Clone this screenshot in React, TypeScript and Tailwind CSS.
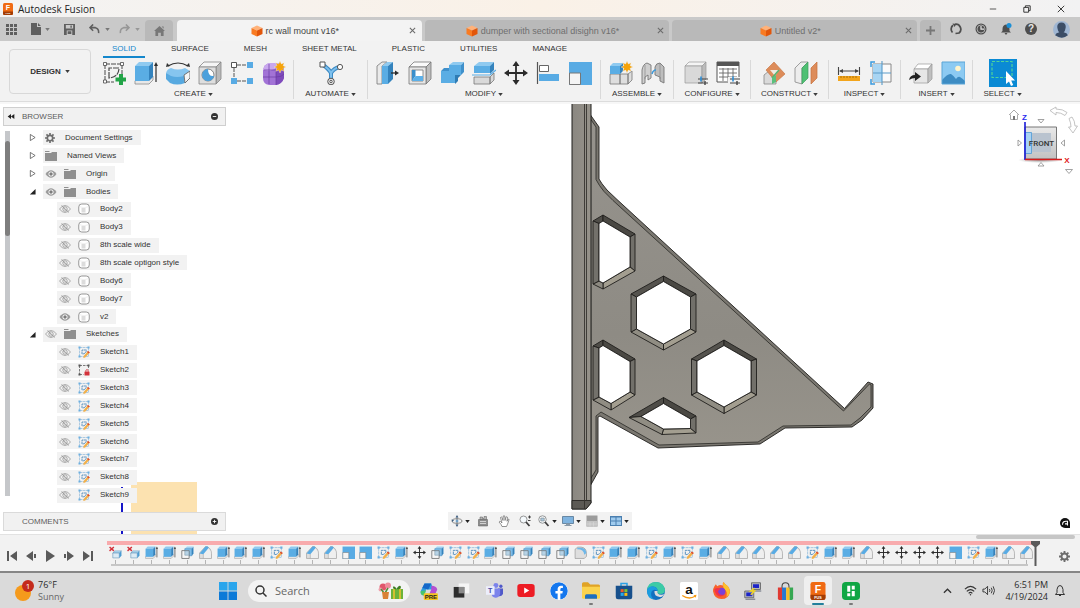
import type { ReactNode } from "react";
import { FaFacebook } from "react-icons/fa";

type IconProps = { className?: string };

/* ---------- small shared bits ---------- */

const Caret = ({ className = "text-[#3c3c3c]" }: IconProps) => (
  <svg viewBox="0 0 6 4" className={`h-[3px] w-[5px] shrink-0 ${className}`} fill="currentColor">
    <path d="M0 0h6L3 4z" />
  </svg>
);

const CubeLogo = ({ className = "size-3" }: IconProps) => (
  <svg viewBox="0 0 24 24" className={className}>
    <path d="M12 1 23 6 12 11 1 6z" fill="#ffb27a" />
    <path d="M1 6l11 5v12L1 18z" fill="#f97b22" />
    <path d="M23 6l-11 5v12l11-5z" fill="#e2560a" />
  </svg>
);

const FusionLogo = ({ className = "size-3" }: IconProps) => (
  <svg viewBox="0 0 24 24" className={className}>
    <rect x="2" y="0" width="20" height="24" rx="3" fill="#f06a13" />
    <path d="M2 17h20v4a3 3 0 0 1-3 3H5a3 3 0 0 1-3-3z" fill="#a33c05" />
    <text x="12" y="14" textAnchor="middle" fontSize="14" fontWeight="700" fontFamily="Liberation Sans, sans-serif" fill="#fff">F</text>
    <text x="12" y="22.500" textAnchor="middle" fontSize="5" fontWeight="700" fontFamily="Liberation Sans, sans-serif" fill="#fff">FUS</text>
  </svg>
);

/* ---------- ribbon and timeline icons ---------- */

const SketchIcon = ({ className = "size-6" }: IconProps) => (
  <svg viewBox="0 0 24 24" className={className} fill="none" stroke="#4a4a4a">
    <path d="M3 3h16M3 3v18M3 21h9M20 3v10" strokeWidth="1" strokeDasharray="5 1" />
    <path d="M7 17V7h10q0 9-10 10z" strokeWidth="1.200" strokeDasharray="6 1" />
    <g fill="#fff" strokeWidth=".8">
      <path d="M1.500 1.500h3v3h-3zM18.500 1.500h3v3h-3zM1.500 19h3v3h-3z" />
    </g>
    <path d="M17 13h4v3.500h3v4h-3V24h-4v-3.500h-3.500v-4H17z" fill="#22a447" stroke="none" />
  </svg>
);

const SketchItemIcon = ({ className = "size-[13px]" }: IconProps) => (
  <svg viewBox="0 0 24 24" className={className} fill="none">
    <path d="M3 3h18v18H3z" stroke="#7fb0d6" strokeWidth="1.200" strokeDasharray="5 1" />
    <path d="M8 16V8h9q-1 8-9 8z" stroke="#4a86b8" strokeWidth="1.700" strokeDasharray="5 1" />
    <path d="M1 1h4v4H1zM19 1h4v4h-4zM1 19h4v4H1z" fill="#6aaee0" />
    <path d="M20 10l3.500 3-9 10-4 1 .8-4z" fill="#f2b04a" />
    <path d="M20 10l3.500 3-2 2.200-3.500-3z" fill="#dc4a35" />
  </svg>
);

const LockedSketchIcon = ({ className = "size-[13px]" }: IconProps) => (
  <svg viewBox="0 0 24 24" className={className} fill="none" stroke="#555">
    <path d="M3 3h18M3 3v18M21 3v8M3 21h8" strokeWidth="1.500" strokeDasharray="5 2" />
    <path d="M1 1h4v4H1zM19 1h4v4h-4zM1 19h4v4H1z" fill="#555" stroke="none" />
    <path d="M15.500 15v-2q2.500-4 5 0v2" stroke="#d3323b" strokeWidth="1.800" />
    <rect x="13" y="15" width="10" height="8" rx="1" fill="#d3323b" stroke="none" />
  </svg>
);

const ExtrudeIcon = ({ className = "size-6" }: IconProps) => (
  <svg viewBox="0 0 24 24" className={className}>
    <path d="M1 20l4-5h14v4l-4 4H1z" fill="#e8e8e8" stroke="#8a8a8a" strokeWidth=".8" />
    <path d="M1 5l4-4h14l-4 4z" fill="#8fcaf0" />
    <path d="M1 5h14v15H1z" fill="#5aade4" />
    <path d="M15 5l4-4v15l-4 4z" fill="#3483bd" />
    <path d="M22 21V4" stroke="#2c2c2c" strokeWidth="1.200" />
    <path d="M22 1l2 4h-4z" fill="#2c2c2c" />
  </svg>
);

const RevolveIcon = ({ className = "size-6" }: IconProps) => (
  <svg viewBox="0 0 24 24" className={className}>
    <path d="M2 5q10-6 20 0" fill="none" stroke="#333" strokeWidth="1.100" />
    <path d="M0 6l1-4 3 3zM24 6l-1-4-3 3z" fill="#333" />
    <path d="M0 12q1-4 5-5 7 3 14 0l5 3-5 6q-6 4-14 1z" fill="#86c5ef" />
    <path d="M0 12l5 3q6 2 13 0l1 7q-8 3-15 0L0 18z" fill="#57a9e0" />
    <path d="M18 14l6-4v7l-5 5z" fill="#f5f5f5" stroke="#666" strokeWidth=".9" />
  </svg>
);

const HoleIcon = ({ className = "size-6" }: IconProps) => (
  <svg viewBox="0 0 24 24" className={className} stroke="#858585" strokeWidth=".8">
    <path d="M1 6l5-5h17l-5 5z" fill="#f5f5f5" />
    <path d="M18 6l5-5v17l-5 5z" fill="#b9b9b9" />
    <path d="M1 6h17v17H1z" fill="#dedede" />
    <circle cx="10" cy="14" r="6" fill="#fff" stroke="#666" />
    <path d="M10 8a6 6 0 1 0 6 7q-6 1-6-7z" fill="#4ba0dc" stroke="none" />
  </svg>
);

const PatternIcon = ({ className = "size-6" }: IconProps) => (
  <svg viewBox="0 0 24 24" className={className}>
    <path d="M7 4h10M4 7v10M7 20h10" fill="none" stroke="#555" strokeDasharray="4 1" />
    <path d="M1.500 1.500h5v5h-5z" fill="#fff" stroke="#555" />
    <path d="M17 1h6v6h-6zM1 17h6v6H1zM17 17h6v6h-6z" fill="#58abe4" />
  </svg>
);

const FormIcon = ({ className = "size-6" }: IconProps) => (
  <svg viewBox="0 0 24 24" className={className}>
    <path d="M1 9q1-6 7-7h8q6 1 6 6v9q-2 6-8 7H7q-6-1-6-7z" fill="#a273d6" />
    <path d="M1 9q1-6 7-7h8l-3 6-6 2z" fill="#c9a8ee" />
    <path d="M14 10l8-3v10q-2 6-8 7z" fill="#7f4cbb" />
    <path d="M7 3v20M1 16h13q6 0 8-3M2 9h12V24" fill="none" stroke="#6a3ba3" strokeWidth=".7" />
    <Spark x={18} y={6} />
  </svg>
);

const Spark = ({ x, y }: { x: number; y: number }) => (
  <path
    transform={`translate(${x} ${y})`}
    d="M0-6l1.300 2.900L4.200-4.200 3.100-1.300 6 0 3.100 1.300 4.200 4.200 1.300 3.100 0 6-1.300 3.100-4.200 4.200-3.100 1.300-6 0-3.100-1.300-4.200-4.200-1.300-3.100z"
    fill="#f5a30a"
    stroke="#f1f1f1"
    strokeWidth=".4"
  />
);

const AutomateIcon = ({ className = "size-6" }: IconProps) => (
  <svg viewBox="0 0 24 24" className={className}>
    <path d="M4 4q6 4 8 8 3-5 9-6M12 12v8" fill="none" stroke="#3c8ac4" strokeWidth="4" />
    <path d="M4 4q6 4 8 8 3-5 9-6M12 12v8" fill="none" stroke="#7dc0ee" strokeWidth="2" />
    <path d="M1 1h5v5H1z" fill="#fff" stroke="#555" />
    <circle cx="21" cy="6" r="2.600" fill="#fff" stroke="#555" />
    <circle cx="12" cy="20.500" r="3.300" fill="#e5e5e5" stroke="#555" />
    <circle cx="12" cy="20.500" r="1.200" fill="#fff" stroke="#555" />
  </svg>
);

const PressPullIcon = ({ className = "size-6" }: IconProps) => (
  <svg viewBox="0 0 24 24" className={className}>
    <path d="M1 5l5-4h5L6 5v18H1z" fill="#eaeaea" stroke="#777" strokeWidth=".8" />
    <path d="M6 5l5-4h6l-5 4z" fill="#8fcaf0" />
    <path d="M6 5h6v18H6z" fill="#5aade4" />
    <path d="M12 5l5-4v17l-5 5z" fill="#3483bd" />
    <path d="M15 12h5" stroke="#2c2c2c" strokeWidth="1.300" />
    <path d="M23 12l-4 2.500v-5z" fill="#2c2c2c" />
  </svg>
);

const ShellIcon = ({ className = "size-6" }: IconProps) => (
  <svg viewBox="0 0 24 24" className={className} stroke="#777" strokeWidth=".8">
    <path d="M1 6l5-5h17l-5 5z" fill="#fafafa" />
    <path d="M18 6l5-5v17l-5 5z" fill="#bdbdbd" />
    <path d="M1 6h17v17H1z" fill="#e6e6e6" />
    <path d="M4 9h11v11H4z" fill="#fff" />
    <path d="M4 9h3.500v6L4 20z" fill="#3b8fcb" stroke="none" />
    <path d="M7.500 15H15v5H4z" fill="#5cb0e8" stroke="none" />
  </svg>
);

const CombineBlueIcon = ({ className = "size-6" }: IconProps) => (
  <svg viewBox="0 0 24 24" className={className}>
    <path d="M9 4l4-3h11l-3 3z" fill="#8fcaf0" />
    <path d="M9 4h12v10h-6v8H1V10h8z" fill="#5aade4" />
    <path d="M1 10l3-3h5v3zM21 4l3-3v10l-3 3z" fill="#3f90cb" />
    <path d="M15 14h6l-3 3v3l-3 3z" fill="#2f7cb4" />
  </svg>
);

const SplitIcon = ({ className = "size-6" }: IconProps) => (
  <svg viewBox="0 0 24 24" className={className}>
    <path d="M2 5l5-4h15l-4 4z" fill="#8fcaf0" />
    <path d="M2 5h16v7H2z" fill="#5aade4" />
    <path d="M18 5l4-4v8l-4 4z" fill="#3483bd" />
    <path d="M0 14h18l6-5" fill="none" stroke="#58abe4" strokeWidth="1.200" />
    <path d="M2 16h16v7H2zM18 16l4-4v7l-4 4z" fill="#d9d9d9" stroke="#777" strokeWidth=".8" />
  </svg>
);

const MoveIcon = ({ className = "size-6" }: IconProps) => (
  <svg viewBox="0 0 24 24" className={className}>
    <path d="M12 3v18M3 12h18" stroke="#2b2b2b" strokeWidth="1.800" />
    <path d="M12 0l3.500 5h-7zM12 24l3.500-5h-7zM0 12l5-3.500v7zM24 12l-5-3.500v7z" fill="#2b2b2b" />
  </svg>
);

const AlignIcon = ({ className = "size-6" }: IconProps) => (
  <svg viewBox="0 0 24 24" className={className}>
    <path d="M1.500 1v22" stroke="#555" strokeWidth="1.200" />
    <path d="M3.500 4.500h9v6h-9z" fill="#fff" stroke="#666" />
    <path d="M3 13h20v7H3z" fill="#58abe4" />
  </svg>
);

const ScaleIcon = ({ className = "size-6" }: IconProps) => (
  <svg viewBox="0 0 24 24" className={className}>
    <path d="M1 1h23v23H1z" fill="#58abe4" />
    <path d="M1.500 12h11v11.500h-11z" fill="#f4f4f4" stroke="#777" />
  </svg>
);

const ComponentIcon = ({ className = "size-6" }: IconProps) => (
  <svg viewBox="0 0 24 24" className={className}>
    <path d="M1 13h10v10H1zM11 13h8v10h-8zM19 13l4-3v9l-4 4z" fill="#dedede" stroke="#777" strokeWidth=".8" />
    <path d="M1 5l3-3h10l-3 3z" fill="#8fcaf0" />
    <path d="M1 5h10v8H1z" fill="#5aade4" />
    <path d="M11 5l3-3v8l-3 3z" fill="#3483bd" />
    <Spark x={18} y={6} />
  </svg>
);

const JointIcon = ({ className = "size-6" }: IconProps) => (
  <svg viewBox="0 0 24 24" className={className}>
    <path d="M1 9q1-6 5-7l4 2v13l-3 2v-5l-3 2v6l-3 1z" fill="#cfcfcf" stroke="#777" strokeWidth=".9" />
    <path d="M14 6q1-4 5-4l4 4v16l-4-2v-4l-5-2z" fill="#bdbdbd" stroke="#777" strokeWidth=".9" />
    <path d="M4 4v14M19 2v16" stroke="#888" strokeWidth=".7" />
    <path d="M11 13q1-4 4-4" fill="none" stroke="#3d98d8" strokeWidth="1.500" />
  </svg>
);

const ConfigureIcon = ({ className = "size-6" }: IconProps) => (
  <svg viewBox="0 0 24 24" className={className}>
    <path d="M1 5l4-4h17l-4 4z" fill="#f4f4f4" stroke="#999" strokeWidth=".7" />
    <path d="M1 5h17v17H1z" fill="#d9d9d9" stroke="#999" strokeWidth=".7" />
    <path d="M18 5l4-4v17l-4 4z" fill="#bcbcbc" stroke="#999" strokeWidth=".7" />
    <path d="M14 18h10M14 22h10" stroke="#444" strokeWidth="1.100" />
    <path d="M17 15.500v5" stroke="#2c8fd8" strokeWidth="1.600" />
    <path d="M21 20v4" stroke="#444" strokeWidth="1.400" />
  </svg>
);

const TableIcon = ({ className = "size-6" }: IconProps) => (
  <svg viewBox="0 0 24 24" className={className}>
    <path d="M1 1h22v20H1z" fill="#fff" stroke="#555" />
    <path d="M1 1h22v4H1z" fill="#555" />
    <path d="M3 8h18M3 12h18M3 16h18M7 7v13M12 7v13M17 7v13" stroke="#666" strokeWidth=".9" />
    <path d="M12 16h12v8H12z" fill="#f1f1f1" />
    <path d="M14 18h10M14 22h10" stroke="#444" strokeWidth="1.100" />
    <path d="M17 15.500v5" stroke="#2c8fd8" strokeWidth="1.600" />
    <path d="M21 20v4" stroke="#444" strokeWidth="1.400" />
  </svg>
);

const PlaneIcon = ({ className = "size-6" }: IconProps) => (
  <svg viewBox="0 0 24 24" className={className}>
    <path d="M2 14l5-4 7 3v10H2z" fill="#dadada" stroke="#888" strokeWidth=".8" />
    <path d="M12 1l11 12-9 8L4 9z" fill="#dd8c5a" stroke="#c5703c" strokeWidth=".6" />
    <path d="M8 9h9l-4 6z" fill="#efe8e0" />
    <path d="M17 9l-7 8" stroke="#55b270" strokeWidth="1.500" />
    <path d="M10 17l4-3v7l-4 2z" fill="#5cc07d" />
  </svg>
);

const MidplaneIcon = ({ className = "size-6" }: IconProps) => (
  <svg viewBox="0 0 24 24" className={className}>
    <path d="M1 7l6-6h7L8 7v16l-7-2z" fill="#ededed" stroke="#888" strokeWidth=".8" />
    <path d="M8 7l6-6v16l-6 6z" fill="#4fc073" stroke="#3c9d5b" strokeWidth=".7" />
    <path d="M17 7l6-6v16l-6 6z" fill="#dd8c5a" stroke="#c5703c" strokeWidth=".7" />
  </svg>
);

const MeasureIcon = ({ className = "size-6" }: IconProps) => (
  <svg viewBox="0 0 24 24" className={className}>
    <path d="M1.500 6v8M22.500 6v8M3 10h18" stroke="#444" strokeWidth="1.100" />
    <path d="M2 10l4-2v4zM22 10l-4-2v4z" fill="#444" />
    <path d="M1 15h22v5H1z" fill="#f3a51c" />
    <path d="M4 15v2M7 15v2M10 15v2M13 15v2M16 15v2M19 15v2" stroke="#9b6505" strokeWidth=".8" />
  </svg>
);

const InterferenceIcon = ({ className = "size-6" }: IconProps) => (
  <svg viewBox="0 0 24 24" className={className}>
    <path d="M4 3h18v18H4z" fill="#fafafa" stroke="#888" />
    <path d="M4 3h9v18H4z" fill="#a8d5f3" />
    <path d="M13 0v24M4 12h18" stroke="#5a9cc9" strokeWidth="1.100" />
    <path d="M6 1H2v5M2 18v5h4" fill="none" stroke="#3a9ade" strokeWidth="1.500" />
  </svg>
);

const InsertIcon = ({ className = "size-6" }: IconProps) => (
  <svg viewBox="0 0 24 24" className={className}>
    <path d="M5 8l4-5h14l-4 5z" fill="#fff" stroke="#999" strokeWidth=".7" />
    <path d="M5 8h14v14H5z" fill="#e6e6e6" stroke="#999" strokeWidth=".7" />
    <path d="M19 8l4-5v15l-4 4z" fill="#bfbfbf" stroke="#999" strokeWidth=".7" />
    <path d="M0 19q1-5 6-5v-3l6 4.500-6 4.500v-3q-3 0-6 2z" fill="#222" />
  </svg>
);

const PictureIcon = ({ className = "size-6" }: IconProps) => (
  <svg viewBox="0 0 24 24" className={className}>
    <path d="M1 1h23v22H1z" fill="#8ccaf2" />
    <circle cx="17" cy="7.500" r="2.800" fill="#fff4cb" />
    <path d="M1 19q6-7 9-6 3 2 5 5 2-3 4-2 3 2 5 4v3H1z" fill="#3d8cc3" />
    <path d="M1 1h23v22H1z" fill="none" stroke="#5aa5d6" />
  </svg>
);

const SelectIcon = ({ className = "size-[28px]" }: IconProps) => (
  <svg viewBox="0 0 28 28" className={className}>
    <path d="M0 0h28v28H0z" fill="#0a8ad4" />
    <path d="M3 2.500h20v16H3z" fill="none" stroke="#4fd39a" strokeWidth="1.200" strokeDasharray="3 1.500" />
    <path d="M17 12v13l3-2.500 2 4.500 2.200-1-2-4.400H26z" fill="#fff" />
  </svg>
);

const CombineIcon = ({ className = "size-6" }: IconProps) => (
  <svg viewBox="0 0 24 24" className={className}>
    <path d="M7 5l4-4h12l-3 4z" fill="#9ed1f3" />
    <path d="M7 5h13v13H7z" fill="#7dbdea" stroke="#4189bd" />
    <path d="M20 5l3-4v13l-3 4z" fill="#3483bd" />
    <path d="M1.500 8.500H15V23H1.500z" fill="#f6f6f6" stroke="#666" strokeWidth="1.400" />
    <path d="M7 9h7.500v8H7z" fill="#b7d3e6" stroke="#7b97aa" />
  </svg>
);

const ChamferIcon = ({ className = "size-6" }: IconProps) => (
  <svg viewBox="0 0 24 24" className={className}>
    <path d="M1 13L12 1h3q8 4 8 13v9H1z" fill="#dedede" stroke="#8c8c8c" />
    <path d="M8 14l9-10q5 4 5 10v8H8z" fill="#efefef" />
    <path d="M1 14L12 1h4l2 2L8 15z" fill="#58abe4" />
    <path d="M8 15v8" fill="none" stroke="#a0a0a0" />
  </svg>
);

const FilletIcon = ({ className = "size-6" }: IconProps) => (
  <svg viewBox="0 0 24 24" className={className}>
    <path d="M2 6l5-4h6q10 1 10 12v5l-4 4H2z" fill="#dedede" stroke="#808080" />
    <path d="M6 3h7q9 1 10 10l-4 3Q18 6 6 6z" fill="#6fb7e8" />
  </svg>
);

const ErrorBodyIcon = ({ className = "size-6" }: IconProps) => (
  <svg viewBox="0 0 24 24" className={className}>
    <path d="M1 2l8 7M9 2L1 9" stroke="#d3323b" strokeWidth="2.600" />
    <path d="M7 13l4-4h12l-4 4z" fill="#b4dcf5" stroke="#5a8eb2" />
    <path d="M7 13h12v9H7z" fill="#dcebf5" stroke="#5a8eb2" />
    <path d="M19 13l4-4v9l-4 4z" fill="#4b9bd2" />
  </svg>
);

/* ---------- browser icons ---------- */

const Eye = ({ className = "h-2 w-3" }: IconProps) => (
  <svg viewBox="0 0 24 16" className={className}>
    <path d="M1 8q11-15 22 0-11 15-22 0z" fill="#9b9b9b" />
    <circle cx="12" cy="8" r="5" fill="#fff" />
    <circle cx="12" cy="8" r="3.500" fill="#7d7d7d" />
  </svg>
);

const EyeHidden = ({ className = "h-2 w-3" }: IconProps) => (
  <svg viewBox="0 0 24 16" className={className} fill="none" stroke="#8d8d8d" strokeWidth="1.400">
    <path d="M1 8q11-14 22 0-11 14-22 0z" />
    <circle cx="12" cy="8" r="4.500" />
    <path d="M5 1l15 14M9 6l5 5" />
  </svg>
);

const Folder = ({ className = "h-[10px] w-3" }: IconProps) => (
  <svg viewBox="0 0 24 20" className={className} fill="#8f8f8f">
    <path d="M0 0h9v2H0zM0 4h12l2-2h10v18H0z" />
  </svg>
);

const Gear = ({ className = "size-[10px]" }: IconProps) => (
  <svg viewBox="0 0 24 24" className={className} fill="none" stroke="#6e6e6e">
    <circle cx="12" cy="12" r="6.500" strokeWidth="4" />
    <path d="M12 0v5M12 19v5M0 12h5M19 12h5M3.500 3.500l3.500 3.500M17 17l3.500 3.500M3.500 20.500L7 17M17 7l3.500-3.500" strokeWidth="4" />
  </svg>
);

const Body = ({ className = "size-3" }: IconProps) => (
  <svg viewBox="0 0 24 24" className={className}>
    <rect x="1.500" y="2" width="21" height="20" rx="6" fill="#fff" stroke="#777" strokeWidth="1.500" />
    <path d="M2 7q10 5 20 0" fill="none" stroke="#ddd" />
    <path d="M7 10h8v9H7z" fill="#dcdcdc" />
  </svg>
);

/* ---------- title bar and document tabs ---------- */

const TitleBar = () => (
  <header className="flex h-[17px] shrink-0 items-center bg-linear-to-r from-[#f3f3f3] via-[#faf1e7] to-[#f2f2f3] pl-[2px]">
    <FusionLogo className="h-3 w-3" />
    <h1 className="ml-1 font-['Open_Sans',sans-serif] text-[10px] leading-4 text-[#222]">Autodesk Fusion</h1>
    <div className="ml-auto flex gap-[2px] pr-[3px]">
      <button aria-label="Minimize" className="flex h-4 w-8 items-center justify-center">
        <svg viewBox="0 0 10 10" className="size-2" stroke="#333"><path d="M1 5h8" /></svg>
      </button>
      <button aria-label="Restore" className="flex h-4 w-8 items-center justify-center">
        <svg viewBox="0 0 10 10" className="size-2" fill="none" stroke="#333" strokeWidth="1.200">
          <path d="M1 3h6v6H1zM3 3V1h6v6H7" />
        </svg>
      </button>
      <button aria-label="Close" className="flex h-4 w-8 items-center justify-center">
        <svg viewBox="0 0 10 10" className="size-2" stroke="#333" strokeWidth="1.200"><path d="M1 1l8 8M9 1L1 9" /></svg>
      </button>
    </div>
  </header>
);

const DocTab = ({ title, active }: { title: string; active?: boolean }) => (
  <div
    className={`flex h-[21px] min-w-0 flex-1 items-center rounded-t-sm pl-[9px] ${
      active ? "bg-[#f3f3f3] text-[#444]" : "bg-[#b9b9b9] text-[#6f6f6f]"
    }`}
  >
    <button className="flex min-w-0 flex-1 items-center justify-center gap-[3px] text-[9px] leading-4 whitespace-nowrap">
      <CubeLogo />
      {title}
    </button>
    <button aria-label={`Close ${title}`} className="flex h-4 w-[18px] items-center justify-center">
      <svg viewBox="0 0 8 8" className="size-[7px]" stroke="#6b6b6b" strokeWidth="1.200"><path d="M1 1l6 6M7 1L1 7" /></svg>
    </button>
  </div>
);

const TabBar = () => (
  <div className="flex h-6 shrink-0 items-end bg-[#c9c9c9]">
    <div className="flex h-full w-[145px] shrink-0 items-center pl-[6px] text-[#5f5f5f]">
      <button aria-label="Data panel">
        <svg viewBox="0 0 11 11" className="size-[11px]" fill="currentColor">
          <path d="M0 0h3v3H0zM4 0h3v3H4zM8 0h3v3H8zM0 4h3v3H0zM4 4h3v3H4zM8 4h3v3H8zM0 8h3v3H0zM4 8h3v3H4zM8 8h3v3H8z" />
        </svg>
      </button>
      <button aria-label="File" className="ml-[14px] flex items-center gap-1">
        <svg viewBox="0 0 10 12" className="h-3 w-[10px]" fill="currentColor"><path d="M0 0h6v4h4v8H0zM7 0l3 3H7z" /></svg>
        <Caret className="text-[#777]" />
      </button>
      <button aria-label="Save" className="ml-[14px]">
        <svg viewBox="0 0 12 12" className="size-[11px]" fill="currentColor">
          <path fillRule="evenodd" d="M0 0h12v12H0zM2 1v4h8V1zM3 7v5h6V7zM7 1.500h1.500v2.500H7zM4 8h4v3H4z" />
        </svg>
      </button>
      <button aria-label="Undo" className="ml-[14px] flex items-center gap-[5px]">
        <svg viewBox="0 0 12 11" className="h-[10px] w-[11px]" fill="none" stroke="currentColor" strokeWidth="1.700">
          <path d="M1 4h6q4 1 3.500 6M4.500 .5L1 4l3.500 3.500" />
        </svg>
        <Caret className="text-[#777]" />
      </button>
      <button aria-label="Redo" className="ml-[9px] flex items-center gap-[5px] text-[#979797]">
        <svg viewBox="0 0 12 11" className="h-[10px] w-[11px]" fill="none" stroke="currentColor" strokeWidth="1.700">
          <path d="M11 4H5Q1 5 1.500 10M7.500 .5L11 4 7.500 7.500" />
        </svg>
        <Caret className="text-[#979797]" />
      </button>
    </div>
    <button aria-label="Home" className="mr-1 flex h-[21px] w-7 shrink-0 items-center justify-center rounded-t-sm bg-[#b9b9b9]">
      <svg viewBox="0 0 12 11" className="h-[10px] w-[11px]" fill="#777">
        <path d="M6 0l6 5.500h-1.500V11H7.500V7.500h-3V11h-3V5.500H0zM8.500 .5h2v2.500z" />
      </svg>
    </button>
    <div className="flex min-w-0 flex-1 gap-[3px]">
      <DocTab title="rc wall mount v16*" active />
      <DocTab title="dumper with sectional disighn v16*" />
      <DocTab title="Untitled v2*" />
    </div>
    <button aria-label="New design" className="ml-[3px] flex h-[21px] w-[21px] shrink-0 items-center justify-center rounded-t-sm bg-[#b9b9b9]">
      <svg viewBox="0 0 10 10" className="size-[9px]" stroke="#777" strokeWidth="2"><path d="M5 0v10M0 5h10" /></svg>
    </button>
    <div className="flex h-full shrink-0 items-center gap-[13px] pr-[10px] pl-[9px]">
      <button aria-label="Extensions">
        <svg viewBox="0 0 24 24" className="size-3" fill="none" stroke="#4e4e4e" strokeWidth="3.500">
          <path d="M5 19A10 10 0 0 1 6 4.500M10 2.500a10 10 0 0 1 8 17.500l-7 1" />
          <path d="M5 1l8 1-4 6z" fill="#4e4e4e" stroke="none" />
        </svg>
      </button>
      <button aria-label="Job status">
        <svg viewBox="0 0 24 24" className="size-3">
          <circle cx="12" cy="12" r="11" fill="#4e4e4e" />
          <circle cx="12" cy="12" r="8" fill="none" stroke="#c9c9c9" strokeWidth="1.500" />
          <path d="M12 6v6h6" fill="none" stroke="#e4e4e4" strokeWidth="2.500" />
        </svg>
      </button>
      <button aria-label="Notifications">
        <svg viewBox="0 0 24 24" className="size-3">
          <path d="M12 3q7 1 7 9v4l3 3H2l3-3v-4q0-8 7-9zM9 20h6l-3 4z" fill="#4e4e4e" />
          <circle cx="18" cy="5" r="5" fill="#1b8fd6" />
        </svg>
      </button>
      <button aria-label="Help" className="flex size-3 items-center justify-center rounded-full bg-[#4e4e4e] text-[10px] leading-3 font-bold text-[#e8e8e8]">
        ?
      </button>
      <button aria-label="Account" className="ml-[3px]">
        <svg viewBox="0 0 24 24" className="size-[17px]">
          <circle cx="12" cy="12" r="12" fill="#9fb6d3" />
          <path d="M12 2q6 0 6 6.500Q17 15 15 16q5 1 6 4-8 7-18 0 1-3 6-4-2-1-3-7.500Q6 2 12 2z" fill="#3b4d66" />
        </svg>
      </button>
    </div>
  </div>
);

/* ---------- ribbon ---------- */

const ribbonTabs = ["SOLID", "SURFACE", "MESH", "SHEET METAL", "PLASTIC", "UTILITIES", "MANAGE"];

type Tool = { name: string; icon: ReactNode };

const ribbonGroups: { label: string; width: string; tools: Tool[] }[] = [
  {
    label: "CREATE",
    width: "w-[199px]",
    tools: [
      { name: "Create Sketch", icon: <SketchIcon /> },
      { name: "Extrude", icon: <ExtrudeIcon /> },
      { name: "Revolve", icon: <RevolveIcon /> },
      { name: "Hole", icon: <HoleIcon /> },
      { name: "Rectangular Pattern", icon: <PatternIcon /> },
      { name: "Create Form", icon: <FormIcon /> },
    ],
  },
  { label: "AUTOMATE", width: "w-[74px]", tools: [{ name: "Automate", icon: <AutomateIcon /> }] },
  {
    label: "MODIFY",
    width: "w-[233px]",
    tools: [
      { name: "Press Pull", icon: <PressPullIcon /> },
      { name: "Shell", icon: <ShellIcon /> },
      { name: "Combine", icon: <CombineBlueIcon /> },
      { name: "Split Body", icon: <SplitIcon /> },
      { name: "Move", icon: <MoveIcon /> },
      { name: "Align", icon: <AlignIcon /> },
      { name: "Scale", icon: <ScaleIcon /> },
    ],
  },
  {
    label: "ASSEMBLE",
    width: "w-[73px]",
    tools: [
      { name: "New Component", icon: <ComponentIcon /> },
      { name: "Joint", icon: <JointIcon /> },
    ],
  },
  {
    label: "CONFIGURE",
    width: "w-[77px]",
    tools: [
      { name: "Configure", icon: <ConfigureIcon /> },
      { name: "Configuration Table", icon: <TableIcon /> },
    ],
  },
  {
    label: "CONSTRUCT",
    width: "w-[78px]",
    tools: [
      { name: "Offset Plane", icon: <PlaneIcon /> },
      { name: "Midplane", icon: <MidplaneIcon /> },
    ],
  },
  {
    label: "INSPECT",
    width: "w-[72px]",
    tools: [
      { name: "Measure", icon: <MeasureIcon /> },
      { name: "Interference", icon: <InterferenceIcon /> },
    ],
  },
  {
    label: "INSERT",
    width: "w-[72px]",
    tools: [
      { name: "Insert Derive", icon: <InsertIcon /> },
      { name: "Canvas", icon: <PictureIcon /> },
    ],
  },
  { label: "SELECT", width: "w-[60px]", tools: [{ name: "Select", icon: <SelectIcon /> }] },
];

const Ribbon = () => (
  <div className="shrink-0 border-b-2 border-[#f7f7f7]">
    <div className="flex h-[61px] border-b border-[#dcdcdc] bg-[#f2f2f2] text-[8px] leading-3 text-[#333]">
      <button className="mt-2 ml-[9px] flex h-[45px] w-[82px] shrink-0 items-center justify-center gap-1 rounded-sm border border-[#d8d8d8] font-bold">
        DESIGN
        <Caret />
      </button>
      <div className="ml-[3px] min-w-0 flex-1">
        <nav className="flex gap-[17px] pl-[9px]">
          {ribbonTabs.map((tab, i) => (
            <button
              key={tab}
              className={`h-[17px] border-b-2 px-[9px] whitespace-nowrap ${
                i === 0 ? "border-[#1487cc] text-[#1487cc]" : "border-transparent"
              }`}
            >
              {tab}
            </button>
          ))}
        </nav>
        <div className="flex">
          {ribbonGroups.map((group, i) => (
            <section
              key={group.label}
              className={`mt-[2px] flex h-[39px] shrink-0 flex-col items-center ${group.width} ${
                i > 0 ? "border-l border-[#d9d9d9]" : ""
              }`}
            >
              <div className="flex h-[26px] shrink-0 items-center gap-2">
                {group.tools.map((tool) => (
                  <button key={tool.name} aria-label={tool.name}>
                    {tool.icon}
                  </button>
                ))}
              </div>
              <button className="mt-[2px] flex shrink-0 items-center gap-[2px]">
                {group.label}
                <Caret />
              </button>
            </section>
          ))}
        </div>
      </div>
    </div>
  </div>
);

/* ---------- browser tree ---------- */

type Kind = "settings" | "views" | "folder" | "body" | "sketch" | "locked";
type Node = { name: string; kind: Kind; open?: boolean; visible?: boolean };

const tree: Node[] = [
  { name: "Document Settings", kind: "settings" },
  { name: "Named Views", kind: "views" },
  { name: "Origin", kind: "folder", visible: true },
  { name: "Bodies", kind: "folder", visible: true, open: true },
  { name: "Body2", kind: "body" },
  { name: "Body3", kind: "body" },
  { name: "8th scale wide", kind: "body" },
  { name: "8th scale optigon style", kind: "body" },
  { name: "Body6", kind: "body" },
  { name: "Body7", kind: "body" },
  { name: "v2", kind: "body", visible: true },
  { name: "Sketches", kind: "folder", open: true },
  { name: "Sketch1", kind: "sketch" },
  { name: "Sketch2", kind: "locked" },
  { name: "Sketch3", kind: "sketch" },
  { name: "Sketch4", kind: "sketch" },
  { name: "Sketch5", kind: "sketch" },
  { name: "Sketch6", kind: "sketch" },
  { name: "Sketch7", kind: "sketch" },
  { name: "Sketch8", kind: "sketch" },
  { name: "Sketch9", kind: "sketch" },
];

const kindIcons: Record<Kind, ReactNode> = {
  settings: <Gear />,
  views: <Folder />,
  folder: <Folder />,
  body: <Body />,
  sketch: <SketchItemIcon className="size-3" />,
  locked: <LockedSketchIcon className="size-3" />,
};

const TreeRow = ({ node }: { node: Node }) => {
  const child = node.kind === "body" || node.kind === "sketch" || node.kind === "locked";
  const hasEye = node.kind !== "settings" && node.kind !== "views";

  return (
    <li className="flex min-h-0 flex-1 items-center pl-[17px]">
      {child ? (
        <span className="w-[30px]" />
      ) : (
        <button aria-label={`Toggle ${node.name}`} className="mr-[6px] flex w-[10px] justify-center">
          <svg viewBox="0 0 8 8" className="size-[7px]">
            {node.open ? <path d="M7.500 1v6.500H1z" fill="#222" /> : <path d="M1.500 .5v7L7 4z" fill="#fff" stroke="#555" strokeWidth=".9" />}
          </svg>
        </button>
      )}
      <div className="flex h-[15px] items-center bg-[#f2f2f2] pr-2 pl-[2px]">
        {hasEye && (
          <button aria-label={`Show or hide ${node.name}`} className="mr-[7px]">
            {node.visible ? <Eye /> : <EyeHidden />}
          </button>
        )}
        {kindIcons[node.kind]}
        <span className="ml-[10px] whitespace-nowrap">{node.name}</span>
      </div>
    </li>
  );
};

const BrowserPanel = () => (
  <aside className="relative ml-[3px] flex h-full w-[223px] flex-col py-[3px] text-[8px] leading-3 text-[#333]">
    <div className="flex h-[19px] shrink-0 items-center border border-[#cfcfcf] bg-[#f1f1f1] px-[3px] text-[#5c5c5c]">
      <button aria-label="Collapse browser">
        <svg viewBox="0 0 8 6" className="h-[5px] w-2" fill="#222"><path d="M4 0v6L0 3zM8 0v6L4 3z" /></svg>
      </button>
      <h2 className="ml-[7px]">BROWSER</h2>
      <button aria-label="Browser options" className="mr-1 ml-auto">
        <svg viewBox="0 0 8 8" className="size-[7px]"><circle cx="4" cy="4" r="4" fill="#333" /><path d="M2 4h4" stroke="#fff" /></svg>
      </button>
    </div>
    <div className="mt-[3px] mb-2 flex min-h-0 flex-1">
      <div className="mt-[2px] mb-2 ml-[2px] w-[5px] bg-[#c5c7ca]">
        <div className="mt-[10px] h-[26%] rounded-full bg-[#7e7e7e]" />
      </div>
      <ul className="flex flex-1 flex-col">
        {tree.map((node) => (
          <TreeRow key={node.name} node={node} />
        ))}
      </ul>
    </div>
    <div className="flex h-[19px] shrink-0 items-center border border-[#dadada] bg-[#f1f1f1] px-[3px] text-[#5c5c5c]">
      <h2 className="ml-[15px]">COMMENTS</h2>
      <button aria-label="Add comment" className="mr-1 ml-auto">
        <svg viewBox="0 0 8 8" className="size-[7px]">
          <circle cx="4" cy="4" r="4" fill="#333" />
          <path d="M2 4h4M4 2v4" stroke="#fff" />
        </svg>
      </button>
    </div>
  </aside>
);

/* ---------- 3D model ---------- */

type Pt = [number, number];

const holes: { outer: Pt[]; inner: Pt[]; fills: string[] }[] = [
  {
    outer: [[593, 221], [603, 215], [635, 234], [635, 271], [603, 289], [593, 284]],
    inner: [[599, 223.5], [603, 221], [630, 237], [630, 267], [603, 283], [599, 281]],
    fills: ["#4f4d48", "#4a4843", "#72706a", "#a39e90", "#8c8980", "#73716b"],
  },
  {
    outer: [[631, 294], [663.5, 276], [696, 294], [696, 332], [663.5, 350], [631, 332]],
    inner: [[636.5, 297], [663.5, 281.5], [690.5, 297], [690.5, 329], [663.5, 344], [636.5, 329]],
    fills: ["#55534e", "#4a4843", "#72706a", "#a39e90", "#908d83", "#73716b"],
  },
  {
    outer: [[691.5, 359], [724, 340], [756.5, 359], [756.5, 395], [724, 413.5], [691.5, 395]],
    inner: [[697, 361], [724, 345.5], [751, 361], [751, 392], [724, 407], [697, 392]],
    fills: ["#55534e", "#4a4843", "#72706a", "#a39e90", "#908d83", "#73716b"],
  },
  {
    outer: [[593, 346], [603, 340], [635, 359], [635, 395], [611, 410], [593, 400]],
    inner: [[599, 348], [603, 345.5], [630, 361.5], [630, 392], [611, 403.5], [599, 397]],
    fills: ["#4f4d48", "#4a4843", "#72706a", "#a39e90", "#908d83", "#73716b"],
  },
  {
    outer: [[629, 417.5], [663.5, 397.5], [696, 416], [696, 433], [662, 434.5]],
    inner: [[641, 416.5], [663.5, 403.5], [690.5, 419], [690.5, 428.5], [663.5, 429]],
    fills: ["#4f4d48", "#4a4843", "#72706a", "#a39e90", "#908d83"],
  },
];

const Model = () => (
  <svg viewBox="0 104 1080 430" className="absolute inset-0 h-full w-full" strokeLinejoin="round">
    <defs>
      <linearGradient id="face" x1="0" y1="0" x2="0" y2="1">
        <stop offset="0" stopColor="#96938d" />
        <stop offset=".6" stopColor="#8e8b84" />
        <stop offset="1" stopColor="#9a968d" />
      </linearGradient>
      <linearGradient id="post" x1="0" y1="0" x2="1" y2="0">
        <stop offset="0" stopColor="#8a8781" />
        <stop offset="1" stopColor="#96928a" />
      </linearGradient>
    </defs>
    {/* back edge strip of the bracket */}
    <path
      d="M590.500 115l8.500 12v52q2 4 8 11l10 9.500L844.500 408.500l23.500-26.500 5 2v24l-11 12-10 7-67 1-25 16-102 4-58-32-2 1v55l-7 12.500z"
      fill="#7a7770"
      stroke="#1f1e1c"
      strokeWidth=".9"
    />
    {/* front face */}
    <path
      d="M590.500 119l5.500 8v52.500q3 6 8 12l9 9L843.500 411l26-27 1.500 1v22l-11 11-9 7-68 1-25 16-99 3-58-33-5 4v54l-5 8z"
      fill="url(#face)"
      stroke="#2a2926"
      strokeWidth=".8"
    />
    {holes.map((hole, n) => (
      <g key={n} stroke="#1f1e1c" strokeWidth=".9">
        {hole.outer.map((p, i) => {
          const j = (i + 1) % hole.outer.length;
          const quad = [p, hole.outer[j], hole.inner[j], hole.inner[i]];
          return <polygon key={i} points={quad.join(" ")} fill={hole.fills[i]} />;
        })}
        <polygon points={hole.inner.join(" ")} fill="#fff" />
      </g>
    ))}
    {/* wall post */}
    <path d="M572 102h19v401l-5 6h-14z" fill="url(#post)" stroke="#1f1e1c" />
    <path d="M572 500.500h19v2.500l-5 6h-14z" fill="#5c5a55" stroke="#1f1e1c" strokeWidth=".8" />
    <path d="M584.500 102v407M586.500 102v398" stroke="#35332f" strokeWidth=".9" />
  </svg>
);

const ViewCube = () => (
  <svg viewBox="1000 104 80 76" className="absolute top-0 right-0 h-[76px] w-20" fontFamily="Liberation Sans, sans-serif">
    <defs>
      <linearGradient id="cube" x1="0" y1="0" x2="0" y2="1">
        <stop offset="0" stopColor="#e9e9e9" />
        <stop offset="1" stopColor="#c2c2c2" />
      </linearGradient>
      <radialGradient id="shade">
        <stop offset="0" stopColor="#999" />
        <stop offset="1" stopColor="#999" stopOpacity="0" />
      </radialGradient>
    </defs>
    <ellipse cx="1040" cy="160" rx="22" ry="3" fill="url(#shade)" />
    <path d="M1009 115l5-5 5 5M1010.500 114.500v5h7v-5" fill="#fff" stroke="#aaa" />
    <path d="M1013 116h2v4h-2z" fill="#777" />
    <path d="M1025 127h31.500v32H1025z" fill="url(#cube)" stroke="#777" />
    <path d="M1032 133h19v19h-19z" fill="#b9c3cf" />
    <path d="M1025 132.500h6.500v21h-6.500z" fill="#a9d2f2" stroke="#4b98d4" strokeWidth=".8" />
    <text x="1041.500" y="146" textAnchor="middle" fontSize="8" fontWeight="500" fontFamily="Roboto, sans-serif" fill="#333">FRONT</text>
    <path d="M1025 122v38" stroke="#1a1ad8" strokeWidth="1.600" />
    <path d="M1025 159.500h37" stroke="#d81a1a" strokeWidth="1.600" />
    <text x="1024.500" y="120" textAnchor="middle" fontSize="8" fontWeight="700" fill="#2a2af0">Z</text>
    <text x="1067" y="163" textAnchor="middle" fontSize="8" fontWeight="700" fill="#e02020">X</text>
    <g fill="#fff" stroke="#8c8c8c" strokeWidth=".8">
      <path d="M1038 119.500h6l-3 3.500zM1038 166h6l-3-3.500zM1018 140v6l3.500-3zM1064.500 140v6l-3.500-3zM1065.500 169.500h7l-3.500 4z" />
    </g>
    <g fill="#fff" stroke="#b5b5b5" strokeWidth=".8">
      <path d="M1050 110.500l6-3.500v2q7 0 11 3.500l-2 3q-4-3-9-3v2.500z" />
      <path d="M1069 118.500l3-1.500q3 4 3 9h2.500l-4.500 7-4.500-6h2.500q0-4-2-8.500z" />
    </g>
  </svg>
);

/* ---------- navigation bar ---------- */

const navTools: { name: string; menu?: boolean; icon: ReactNode }[] = [
  {
    name: "Orbit",
    menu: true,
    icon: (
      <g fill="none" stroke="#666" strokeWidth="1.500">
        <ellipse cx="12" cy="12" rx="10" ry="4.500" />
        <path d="M12 4v16" />
        <path d="M12 0l3 5H9zM12 24l3-5H9zM1 9l5 1-3 4z" fill="#3b5d80" stroke="none" />
        <path d="M9 12h6M12 9v6" stroke="#3d8ecb" />
      </g>
    ),
  },
  {
    name: "Look At",
    icon: (
      <g>
        <path d="M3 9h18v13H3z" fill="#8d8d8d" stroke="#555" />
        <path d="M6 9V4h5v3h3V3h5v6z" fill="#b5b5b5" stroke="#555" />
        <path d="M6 13h12M6 17h12" stroke="#e8e8e8" strokeWidth="1.500" />
      </g>
    ),
  },
  {
    name: "Pan",
    icon: (
      <path
        d="M8 23q-1-4-6-9 1-2 3-1l3 3L5 5q2-2 3 0l2 6 .500-9q1.500-2 3 0l.500 9 2-7q2-1.500 3 .500l-1 8 2-4q2-1 2 1l-3 9-2 4.500z"
        fill="#fff"
        stroke="#666"
        strokeWidth="1.400"
      />
    ),
  },
  {
    name: "Zoom",
    icon: (
      <g>
        <circle cx="9" cy="9" r="7" fill="#f5fafd" stroke="#777" strokeWidth="1.500" />
        <path d="M14 14l7 8" stroke="#3f3f3f" strokeWidth="3.500" />
        <path d="M18 4h6M21 1v6M18 11h5" stroke="#333" strokeWidth="1.800" />
      </g>
    ),
  },
  {
    name: "Fit",
    menu: true,
    icon: (
      <g>
        <circle cx="9" cy="9" r="7.500" fill="#f5fafd" stroke="#777" strokeWidth="1.500" />
        <path d="M5.500 6h7v6h-7z" fill="#a9c9df" stroke="#777" />
        <path d="M14 14l7 8" stroke="#3f3f3f" strokeWidth="3.500" />
      </g>
    ),
  },
  {
    name: "Display Settings",
    menu: true,
    icon: (
      <g>
        <path d="M1 3h22v14H1z" fill="#7fb3df" stroke="#4e6f8d" strokeWidth="1.500" />
        <path d="M8 17h8v3h3v2H5v-2h3z" fill="#8a9aa8" />
      </g>
    ),
  },
  {
    name: "Grid and Snaps",
    menu: true,
    icon: (
      <g>
        <path d="M1 1h22v22H1z" fill="#9c9c9c" />
        <path d="M1 12h22v11H1z" fill="#c4c4c4" />
        <path d="M8 14v9M15 14v9M1 18h22" stroke="#ddd" />
      </g>
    ),
  },
  {
    name: "Viewports",
    menu: true,
    icon: (
      <g>
        <path d="M0 2h24v20H0z" fill="#4a7fb0" />
        <path d="M2 5h9v6H2zM13 5h9v6h-9zM2 13h9v7H2zM13 13h9v7h-9z" fill="#9fcbee" />
      </g>
    ),
  },
];

const NavBar = () => (
  <div className="absolute bottom-1 left-1/2 flex h-[18px] -translate-x-1/2 items-center gap-[5px] bg-[#f2f2f2] px-[3px]">
    {navTools.map((tool) => (
      <button key={tool.name} aria-label={tool.name} className={`flex items-center ${tool.menu ? "gap-[2px]" : "px-[2px]"}`}>
        <svg viewBox="0 0 24 24" className="size-3">{tool.icon}</svg>
        {tool.menu && <Caret className="text-[#222]" />}
      </button>
    ))}
  </div>
);

/* ---------- timeline ---------- */

const featureIcons = {
  x: ErrorBodyIcon,
  e: ExtrudeIcon,
  b: CombineIcon,
  c: ChamferIcon,
  s: SketchItemIcon,
  l: ScaleIcon,
  m: MoveIcon,
  f: FilletIcon,
};

const features = "xxeebceeeseccllsembssebbbbfseesesecccccseecmmmmlsecc".split("") as (keyof typeof featureIcons)[];

const playback = [
  { name: "Go to start", d: "M1 1h2v10H1zM11 1v10L4 6z" },
  { name: "Step back", d: "M8 1v10L1 6zM9 4h2v4H9z" },
  { name: "Play", d: "M2 0v12l9-6z" },
  { name: "Step forward", d: "M4 1v10l7-5zM1 4h2v4H1z" },
  { name: "Go to end", d: "M9 1h2v10H9zM1 1v10l7-5z" },
];

const Timeline = () => (
  <section className="shrink-0 bg-[#f2f2f2]">
    <div className="flex h-[7px] justify-end border-t border-[#e2e2e2] pr-[5px]">
      <div className="h-1 w-[99px] rounded-full bg-[#c6c6c6]" />
    </div>
    <div className="flex h-[30px]">
      <div className="flex w-[107px] shrink-0 items-center gap-[7px] pl-[6px]">
        {playback.map((p) => (
          <button key={p.name} aria-label={p.name}>
            <svg viewBox="0 0 12 12" className="size-3" fill="#5a5a5a"><path d={p.d} /></svg>
          </button>
        ))}
      </div>
      <div className="relative min-w-0 flex-1">
        <div className="h-1 bg-[#f8abad]" />
        <div className="flex">
          {features.map((f, i) => {
            const Icon = featureIcons[f];
            return (
              <button key={i} aria-label={`Feature ${i + 1}`} className="flex min-w-0 flex-1 flex-col items-center">
                <Icon className="my-[1px] size-[13px]" />
                <span className="h-1 w-px bg-[#b5b5b5]" />
              </button>
            );
          })}
        </div>
        <div className="mr-2 ml-1 h-[2px] bg-[#c6c6c6]" />
        <svg viewBox="0 0 9 25" className="absolute top-0 -right-1 h-[25px] w-[9px]">
          <path d="M0 0h9v3L5.500 6V25h-2V6L0 3z" fill="#5a5a5a" />
        </svg>
      </div>
      <button aria-label="Timeline settings" className="flex w-11 shrink-0 items-center justify-center pl-3">
        <Gear className="size-[11px]" />
      </button>
    </div>
  </section>
);

/* ---------- taskbar ---------- */

const apps: { name: string; active?: boolean; running?: boolean; icon: ReactNode }[] = [
  {
    name: "Copilot",
    icon: (
      <svg viewBox="0 0 24 24" className="size-[18px]">
        <path d="M6 2h9l3 8H8l-3 8Q0 17 1 12z" fill="#2c9be0" />
        <path d="M3 8l3-6h9l-4 8z" fill="#1467c8" />
        <path d="M15 5q7 0 8 5l-4 9h-8l4-9z" fill="#b34fd1" />
        <path d="M1 12l7-1-2 7Q0 18 1 12z" fill="#47c46f" />
        <rect x="5" y="15" width="19" height="9" rx="1.500" fill="#f6c620" />
        <text x="14.500" y="22.500" textAnchor="middle" fontSize="8" fontWeight="700" fontFamily="Liberation Sans, sans-serif" fill="#222">PRE</text>
      </svg>
    ),
  },
  {
    name: "Task View",
    icon: (
      <svg viewBox="0 0 24 24" className="size-[17px]">
        <path d="M8 2h15v14H8z" fill="#f5f5f5" />
        <path d="M1 7h15v15H1z" fill="#2d2d2d" />
        <path d="M8 7h8v9H8z" fill="#8a8a8a" />
      </svg>
    ),
  },
  {
    name: "Teams",
    icon: (
      <svg viewBox="0 0 24 24" className="size-[17px]">
        <circle cx="14" cy="5" r="3.500" fill="#7b83eb" />
        <circle cx="21" cy="6" r="2.300" fill="#5059c9" />
        <path d="M17 9h7v8q-2 4-7 3z" fill="#5059c9" />
        <path d="M8 9h12v8q-2 6-8 5-4-1-4-5z" fill="#7b83eb" />
        <path d="M0 6h12v12H0z" fill="#eceefc" />
        <text x="6" y="15.500" textAnchor="middle" fontSize="10" fontWeight="700" fontFamily="Liberation Sans, sans-serif" fill="#444ba8">T</text>
      </svg>
    ),
  },
  {
    name: "YouTube",
    icon: (
      <svg viewBox="0 0 24 18" className="h-[13px] w-[18px]">
        <rect width="24" height="18" rx="4" fill="#ed1c24" />
        <path d="M9.500 5v8l7-4z" fill="#fff" />
      </svg>
    ),
  },
  { name: "Facebook", icon: <FaFacebook className="size-[18px] rounded-full bg-white text-[#1477ee]" /> },
  {
    name: "File Explorer",
    running: true,
    icon: (
      <svg viewBox="0 0 24 22" className="h-[17px] w-[18px]">
        <path d="M0 2q0-2 2-2h6l3 3h11q2 0 2 2v6H0z" fill="#e0a326" />
        <path d="M0 6h24v14q0 2-2 2H2q-2 0-2-2z" fill="#fbd34d" />
        <path d="M4 22v-4q0-2 2-2h12q2 0 2 2v4z" fill="#1d6fc0" />
      </svg>
    ),
  },
  {
    name: "Microsoft Store",
    icon: (
      <svg viewBox="0 0 24 24" className="size-[18px]">
        <path d="M8 6V2h8v4" fill="none" stroke="#2ba0e5" strokeWidth="2" />
        <path d="M1 5h22v15q0 3-3 3H4q-3 0-3-3z" fill="#17508c" />
        <path d="M7.500 9.500h4v4h-4z" fill="#f05a2a" />
        <path d="M12.500 9.500h4v4h-4z" fill="#80c030" />
        <path d="M7.500 14.500h4v4h-4z" fill="#28a8ea" />
        <path d="M12.500 14.500h4v4h-4z" fill="#fbbc12" />
      </svg>
    ),
  },
  {
    name: "Edge",
    icon: (
      <svg viewBox="0 0 24 24" className="size-[18px]">
        <circle cx="12" cy="12" r="12" fill="#1470c0" />
        <path d="M0 11Q1 0 12 0q10 0 12 10 0 6-6 6-5 0-4-3Q15 7 8 6 2 6 0 11z" fill="#3ccba6" />
        <path d="M0 11Q2 5 8 6q6 1 6 6-5-4-8 1-2 6 3 10Q0 22 0 11z" fill="#1b9de0" />
        <path d="M14 12q-1 5 5 5 3 0 4-1.500Q21 20 17 20q-8-1-7-8z" fill="#dcdcdc" />
      </svg>
    ),
  },
  {
    name: "Amazon",
    icon: (
      <svg viewBox="0 0 24 24" className="size-[18px]">
        <rect width="24" height="24" rx="2" fill="#fff" />
        <text x="12" y="16.500" textAnchor="middle" fontSize="18" fontWeight="700" fontFamily="Liberation Sans, sans-serif" fill="#111">a</text>
        <path d="M3 18q9 6 17 1" fill="none" stroke="#f59a13" strokeWidth="1.800" />
        <path d="M18 17.500l4-.500-1 4z" fill="#f59a13" />
      </svg>
    ),
  },
  {
    name: "Firefox",
    icon: (
      <svg viewBox="0 0 24 24" className="size-[17px]">
        <path d="M2 6l2-3 2 3q4-3 8-1Q13 2 15 0q2 4 6 6 3 4 3 8-2 10-12 10T0 13q0-4 2-7z" fill="#f9622b" />
        <path d="M15 0q2 4 6 6 3 4 3 8-1 5-5 7 2-7-3-11-3-4-1-10z" fill="#fdc32c" />
        <circle cx="12" cy="13.500" r="5.500" fill="#7b40d8" />
        <path d="M2 10q5-3 9 0-3 1-4 3 1 6 9 5-6 5-11 0-3-3-3-8z" fill="#f0324b" />
      </svg>
    ),
  },
  {
    name: "PuTTY",
    icon: (
      <svg viewBox="0 0 24 24" className="size-[18px]">
        <path d="M10 1h12v9H10zM1 12h12v9H1z" fill="#b4b7c0" stroke="#555" />
        <path d="M12 3h8v5h-8zM3 14h8v5H3z" fill="#1d25c7" />
        <path d="M11 11h12v2H11zM2 22h13v2H2z" fill="#8b8e98" />
        <path d="M14 8L9 12h5l-5 5" fill="none" stroke="#f3d624" strokeWidth="2" />
      </svg>
    ),
  },
  {
    name: "Shopping",
    icon: (
      <svg viewBox="0 0 24 26" className="h-[18px] w-[17px]">
        <path d="M7 10V6q0-5 5-5t5 5v4" fill="none" stroke="#444" strokeWidth="1.500" />
        <path d="M1 8h6v18H3q-2 0-2-2z" fill="#e03a32" />
        <path d="M7 8h6v18H7z" fill="#2778d0" />
        <path d="M13 8h5v18h-5z" fill="#f6bd25" />
        <path d="M18 8h5v16q0 2-2 2h-3z" fill="#36a752" />
      </svg>
    ),
  },
  { name: "Autodesk Fusion", active: true, icon: <FusionLogo className="size-[18px]" /> },
  {
    name: "Green Dashboard",
    running: true,
    icon: (
      <svg viewBox="0 0 24 24" className="size-[18px]">
        <rect width="24" height="24" rx="5" fill="#0fa644" />
        <path d="M7 5h4v8H7zM13 5h4v5h-4zM7 15h4v4H7zM13 12h4v7h-4z" fill="#fff" />
      </svg>
    ),
  },
];

const Taskbar = () => (
  <footer className="flex h-[37px] shrink-0 items-center border-t-2 border-[#858585] bg-[#dadada] font-['Open_Sans',sans-serif] text-[9px] leading-3 text-[#2a2a2a]">
    <button className="flex w-[219px] shrink-0 items-center gap-[3px] pl-[15px] text-left">
      <svg viewBox="0 0 20 22" className="h-[22px] w-5">
        <circle cx="8" cy="13" r="8" fill="#f59a1c" />
        <circle cx="13" cy="6" r="6" fill="#c42b1c" />
        <text x="13" y="9" textAnchor="middle" fontSize="8" fill="#fff">1</text>
      </svg>
      <span>
        <span className="block">76°F</span>
        <span className="block text-[#666]">Sunny</span>
      </span>
    </button>
    <button aria-label="Start">
      <svg viewBox="0 0 20 20" className="size-[18px]">
        <path d="M0 0h9.500v9.500H0zM10.500 0H20v9.500h-9.500z" fill="#2aa5ec" />
        <path d="M0 10.500h9.500V20H0zM10.500 10.500H20V20h-9.500z" fill="#0c7ad8" />
      </svg>
    </button>
    <label className="ml-[11px] flex h-[22px] w-[162px] shrink-0 items-center rounded-full bg-[#f3f3f3] pr-[6px] pl-[7px]">
      <svg viewBox="0 0 12 12" className="size-3 shrink-0" fill="none" stroke="#333" strokeWidth="1.500">
        <circle cx="5" cy="5" r="4" />
        <path d="M8 8l3.500 3.500" />
      </svg>
      <input
        aria-label="Search"
        placeholder="Search"
        className="ml-2 min-w-0 flex-1 text-[11px] leading-4 outline-none placeholder:text-[#666]"
      />
      <svg viewBox="0 0 26 18" className="h-[18px] w-[26px] shrink-0">
        <circle cx="5" cy="5" r="3.500" fill="#e0566b" />
        <circle cx="10" cy="3.500" r="3" fill="#ee8c9c" />
        <circle cx="2.500" cy="7.500" r="2" fill="#f0a1ad" />
        <path d="M3 7l3 4M10 6l-3 5" stroke="#4e8f3a" strokeWidth="1.500" />
        <path d="M4 10h7l-1 7H5z" fill="#d98136" />
        <path d="M13 7h12v10H13z" fill="#6cb33b" />
        <path d="M16 7v10M22 7v10" stroke="#f2c531" strokeWidth="1.500" />
        <path d="M19 7q-4-5-4-1 1 2 4 1 4 1 4-2-1-3-4 1z" fill="#3f7f25" />
      </svg>
    </label>
    <div className="ml-[3px] grid w-[454px] shrink-0 grid-cols-14">
      {apps.map((app) => (
        <button
          key={app.name}
          aria-label={app.name}
          className={`relative mx-auto flex h-[29px] w-7 items-center justify-center rounded ${app.active ? "bg-[#efefef]" : ""}`}
        >
          {app.icon}
          {app.active && <span className="absolute bottom-0 h-[2px] w-3 rounded-full bg-[#24809c]" />}
          {app.running && <span className="absolute bottom-0 h-[2px] w-1 rounded-full bg-[#7a7a7a]" />}
        </button>
      ))}
    </div>
    <div className="ml-auto flex items-center pr-[15px]">
      <button aria-label="Show hidden icons">
        <svg viewBox="0 0 10 6" className="h-[6px] w-[9px]" fill="none" stroke="#333" strokeWidth="1.400"><path d="M1 5l4-4 4 4" /></svg>
      </button>
      <button aria-label="Network and sound" className="ml-3 flex gap-[5px]">
        <svg viewBox="0 0 14 11" className="h-[11px] w-[13px]" fill="none" stroke="#333" strokeWidth="1.200">
          <path d="M1 4q6-6 12 0M3 6.500q4-4 8 0M5 8.500q2-2 4 0" />
          <circle cx="7" cy="10" r=".8" fill="#333" stroke="none" />
        </svg>
        <svg viewBox="0 0 14 11" className="h-[11px] w-[13px]" fill="none" stroke="#333">
          <path d="M1 4h2l3-3v9L3 7H1zM8 4q1 1.500 0 3M10 2.500q2 3 0 6M12 1q3 4.500 0 9" />
        </svg>
      </button>
      <button className="ml-[10px] text-right">
        <span className="block">6:51 PM</span>
        <span className="block">4/19/2024</span>
      </button>
      <button aria-label="Notifications" className="ml-[7px]">
        <svg viewBox="0 0 10 12" className="h-3 w-[10px]" fill="none" stroke="#333"><path d="M.5 9.500l1.500-2V4.500q.500-4 3-4t3 4v3l1.500 2zM3.500 9.500q1.500 3 3 0" /></svg>
      </button>
    </div>
  </footer>
);

export default function App() {
  return (
    <div className="flex h-screen min-h-[400px] flex-col overflow-hidden bg-white font-['Liberation_Sans',Arial,sans-serif]">
      <TitleBar />
      <TabBar />
      <Ribbon />
      <main className="relative min-h-0 flex-1 overflow-hidden bg-white">
        <Model />
        {/* origin plane and Z axis behind the browser */}
        <div className="absolute bottom-0 left-[131px] h-[52px] w-[66px] bg-[#fce2b0]" />
        <div className="absolute bottom-0 left-[121px] h-[47px] w-[2px] bg-[#1616c8]" />
        <BrowserPanel />
        <ViewCube />
        <NavBar />
        <button aria-label="Assistant" className="absolute right-[10px] bottom-[6px]">
          <svg viewBox="0 0 12 12" className="size-[10px]">
            <path d="M6 0a6 6 0 0 1 6 6v6H6A6 6 0 0 1 6 0z" fill="#111" />
            <path d="M3 8q0-5 6-4v5M6 7h3" fill="none" stroke="#fff" strokeWidth="1.300" />
          </svg>
        </button>
      </main>
      <Timeline />
      <Taskbar />
    </div>
  );
}
